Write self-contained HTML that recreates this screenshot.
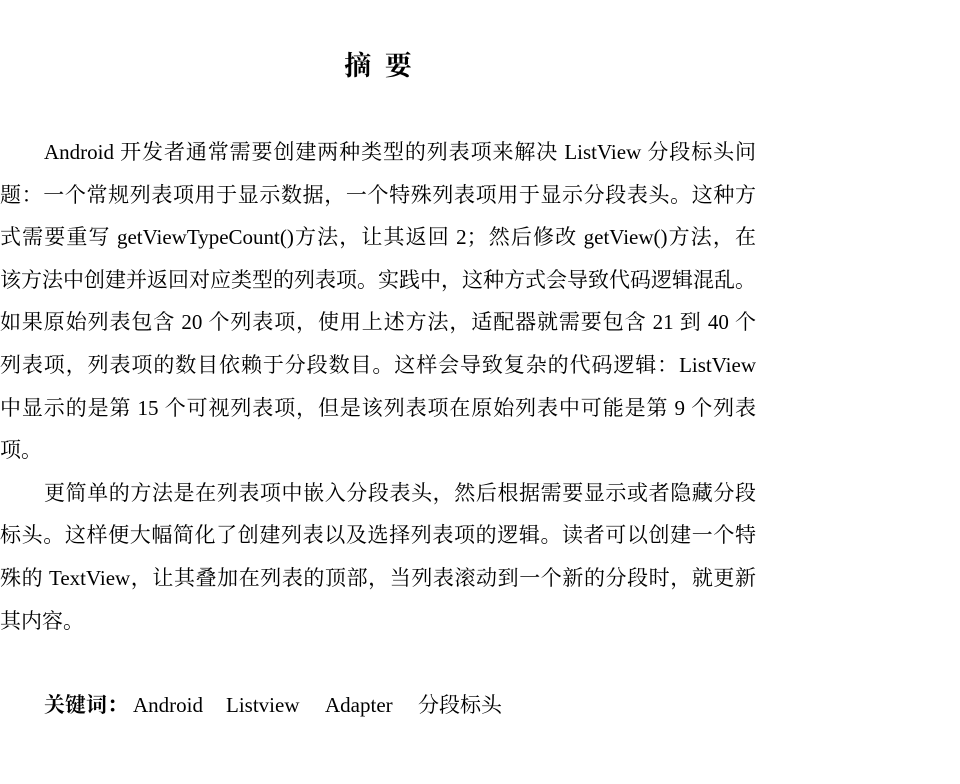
<!DOCTYPE html>
<html><head><meta charset="utf-8"><style>
html,body{margin:0;padding:0;background:#fff;width:960px;height:784px;overflow:hidden}
body{font-family:"Liberation Serif","Noto Serif CJK SC",serif;color:#000;font-size:21px}
.t{position:absolute;left:0;width:756px;top:46px;text-align:center;font-weight:bold;font-size:27px;line-height:40px;font-family:"Liberation Serif","Noto Serif CJK SC",serif}
.b{position:absolute;left:0;top:131px;width:756px}
.l{height:42.6px;line-height:42.6px;text-align:justify;text-align-last:justify;white-space:nowrap}
.l.e{text-align-last:left}
.i{padding-left:44px}
.k{position:absolute;left:44px;top:684px;line-height:42px;white-space:nowrap}
.k b{font-weight:bold;display:inline-block;width:89px}
.k span{display:inline-block}
</style></head><body>
<div class="t">摘&nbsp;&nbsp;要</div>
<div class="b">
<div class="l i">Android 开发者通常需要创建两种类型的列表项来解决 ListView 分段标头问</div>
<div class="l">题：一个常规列表项用于显示数据，一个特殊列表项用于显示分段表头。这种方</div>
<div class="l">式需要重写 getViewTypeCount()方法，让其返回 2；然后修改 getView()方法，在</div>
<div class="l">该方法中创建并返回对应类型的列表项。实践中，这种方式会导致代码逻辑混乱。</div>
<div class="l">如果原始列表包含 20 个列表项，使用上述方法，适配器就需要包含 21 到 40 个</div>
<div class="l">列表项，列表项的数目依赖于分段数目。这样会导致复杂的代码逻辑：ListView</div>
<div class="l">中显示的是第 15 个可视列表项，但是该列表项在原始列表中可能是第 9 个列表</div>
<div class="l e">项。</div>
<div class="l i">更简单的方法是在列表项中嵌入分段表头，然后根据需要显示或者隐藏分段</div>
<div class="l">标头。这样便大幅简化了创建列表以及选择列表项的逻辑。读者可以创建一个特</div>
<div class="l">殊的 TextView，让其叠加在列表的顶部，当列表滚动到一个新的分段时，就更新</div>
<div class="l e">其内容。</div>
</div>
<div class="k"><b>关键词：</b><span style="width:93px">Android</span><span style="width:99px">Listview</span><span style="width:93px">Adapter</span>分段标头</div>
</body></html>
